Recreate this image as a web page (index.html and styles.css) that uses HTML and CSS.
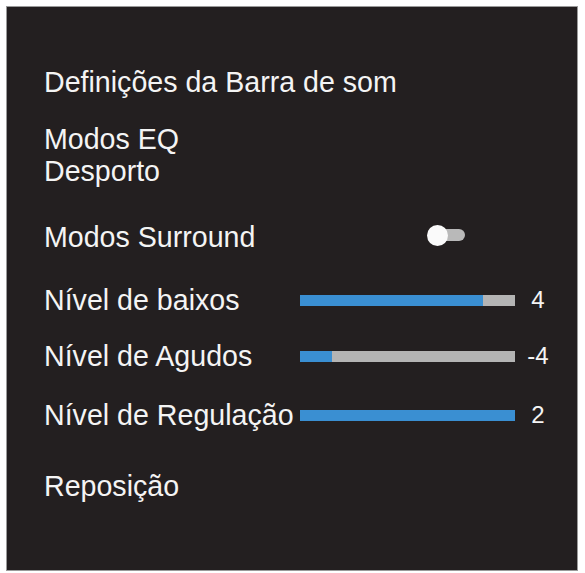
FILE: index.html
```html
<!DOCTYPE html>
<html lang="pt">
<head>
    <meta charset="UTF-8">
    <meta name="viewport" content="width=device-width, initial-scale=1.0">
    <title>Definições da Barra de som</title>
    <link rel="stylesheet" href="styles.css">
</head>
<body>
    <div class="panel">
        <div class="title">Definições da Barra de som</div>

        <div class="item eq">
            <div>Modos EQ</div>
            <div>Desporto</div>
        </div>

        <div class="row surround">
            <div class="label">Modos Surround</div>
            <div class="toggle">
                <span class="toggle-track"></span>
                <span class="toggle-knob"></span>
            </div>
        </div>

        <div class="row bass">
            <div class="label">Nível de baixos</div>
            <div class="bar"><div class="bar-fill" style="width: 85%"></div></div>
            <div class="value">4</div>
        </div>

        <div class="row treble">
            <div class="label">Nível de Agudos</div>
            <div class="bar"><div class="bar-fill" style="width: 15%"></div></div>
            <div class="value">-4</div>
        </div>

        <div class="row balance">
            <div class="label">Nível de Regulação</div>
            <div class="bar"><div class="bar-fill" style="width: 100%"></div></div>
            <div class="value">2</div>
        </div>

        <div class="item reset">Reposição</div>
    </div>
</body>
</html>
```

FILE: styles.css
```css
body {
    margin: 0;
    padding: 0;
    background-color: #fff;
    font-family: "Liberation Sans", Arial, Helvetica, sans-serif;
}
.panel {
    margin: 6px;
    width: 572px;
    height: 565px;
    box-sizing: border-box;
    border: 1px solid #9a9a9a;
    background-color: #231f20;
    color: #f4f4f4;
    padding: 59px 0 0 37px;
    font-size: 28.6px;
    line-height: 32px;
}
.eq {
    margin-top: 25px;
}
.row {
    display: flex;
    align-items: center;
    height: 32px;
}
.label {
    width: 256px;
    flex-shrink: 0;
    white-space: nowrap;
}
.surround {
    margin-top: 34px;
}
.bass {
    margin-top: 31px;
}
.treble {
    margin-top: 24px;
}
.balance {
    margin-top: 27px;
}
.reset {
    margin-top: 39px;
}
.toggle {
    position: relative;
    width: 40px;
    height: 20px;
    margin-left: 127px;
    margin-top: -4px;
}
.toggle-track {
    position: absolute;
    left: 10px;
    top: 4px;
    width: 28px;
    height: 12px;
    border-radius: 6px;
    background-color: #b9b9b9;
}
.toggle-knob {
    position: absolute;
    left: 0;
    top: 0;
    width: 21px;
    height: 21px;
    border-radius: 50%;
    background-color: #fafafa;
}
.bar {
    width: 215px;
    height: 11px;
    background-color: #b4b4b4;
}
.bar-fill {
    height: 100%;
    background-color: #3a8fd2;
}
.value {
    width: 36px;
    margin-left: 5px;
    text-align: center;
    font-size: 24px;
}
```
